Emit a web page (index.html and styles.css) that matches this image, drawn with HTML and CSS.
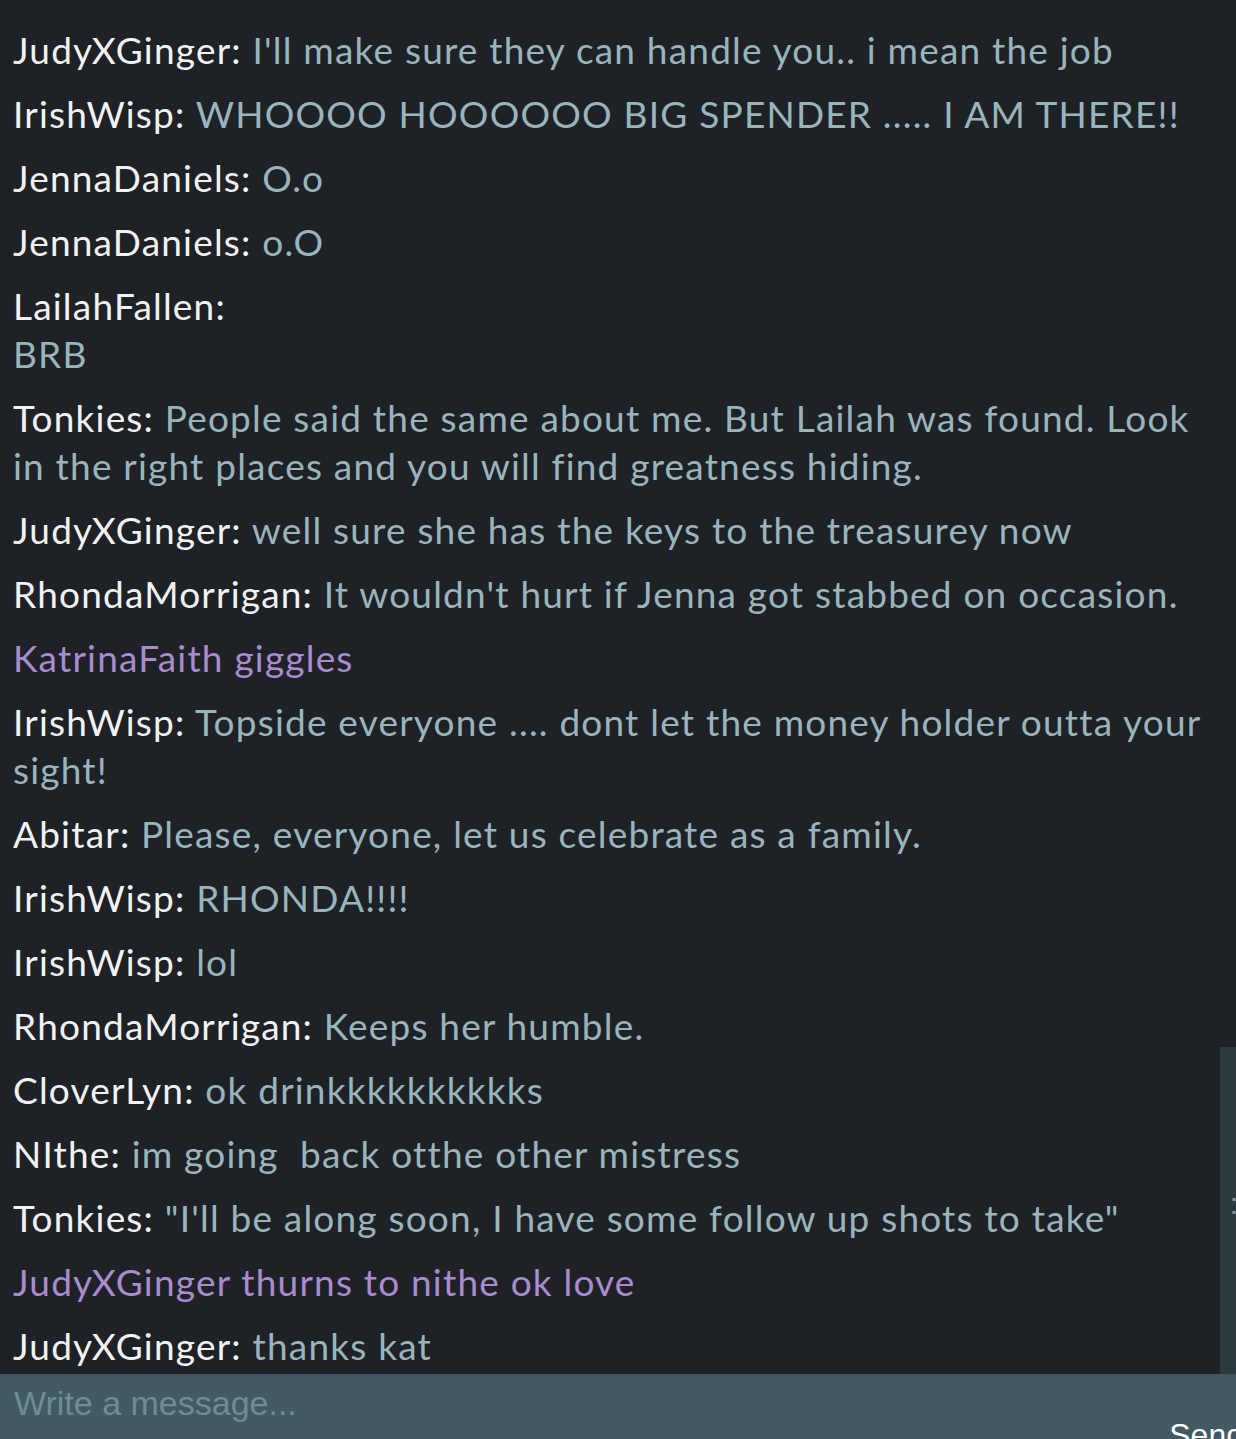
FILE: index.html
```html
<!DOCTYPE html>
<html lang="en">
<head>
<meta charset="utf-8">
<title>Chat</title>
<link rel="stylesheet" href="styles.css">
</head>
<body>
<div class="app">
  <div class="main">
    <div class="log">
      <div class="msg action">JennaDaniels smiles</div>
      <div class="msg"><span class="name">JudyXGinger:</span> <span class="text">I'll make sure they can handle you.. i mean the job</span></div>
      <div class="msg"><span class="name">IrishWisp:</span> <span class="text">WHOOOO HOOOOOO BIG SPENDER ..... I AM THERE!!</span></div>
      <div class="msg"><span class="name">JennaDaniels:</span> <span class="text">O.o</span></div>
      <div class="msg"><span class="name">JennaDaniels:</span> <span class="text">o.O</span></div>
      <div class="msg"><span class="name">LailahFallen:</span> <div class="text">BRB</div></div>
      <div class="msg"><span class="name">Tonkies:</span> <span class="text">People said the same about me. But Lailah was found. Look in the right places and you will find greatness hiding.</span></div>
      <div class="msg"><span class="name">JudyXGinger:</span> <span class="text">well sure she has the keys to the treasurey now</span></div>
      <div class="msg"><span class="name">RhondaMorrigan:</span> <span class="text">It wouldn't hurt if Jenna got stabbed on occasion.</span></div>
      <div class="msg action">KatrinaFaith giggles</div>
      <div class="msg"><span class="name">IrishWisp:</span> <span class="text">Topside everyone .... dont let the money holder outta your sight!</span></div>
      <div class="msg"><span class="name">Abitar:</span> <span class="text">Please, everyone, let us celebrate as a family.</span></div>
      <div class="msg"><span class="name">IrishWisp:</span> <span class="text">RHONDA!!!!</span></div>
      <div class="msg"><span class="name">IrishWisp:</span> <span class="text">lol</span></div>
      <div class="msg"><span class="name">RhondaMorrigan:</span> <span class="text">Keeps her humble.</span></div>
      <div class="msg"><span class="name">CloverLyn:</span> <span class="text">ok drinkkkkkkkkkks</span></div>
      <div class="msg"><span class="name">NIthe:</span> <span class="text">im going&nbsp; back otthe other mistress</span></div>
      <div class="msg"><span class="name">Tonkies:</span> <span class="text">"I'll be along soon, I have some follow up shots to take"</span></div>
      <div class="msg action">JudyXGinger thurns to nithe ok love</div>
      <div class="msg"><span class="name">JudyXGinger:</span> <span class="text">thanks kat</span></div>
    </div>
    <div class="side"><span class="grip">:</span></div>
  </div>
  <div class="composer">
    <div class="placeholder">Write a message...</div>
    <div class="send">Send</div>
  </div>
</div>
</body>
</html>
```

FILE: styles.css
```css
html, body {
  margin: 0;
  padding: 0;
  background: #1e2227;
}
.app {
  width: 1236px;
  height: 1439px;
  display: flex;
  flex-direction: column;
  overflow: hidden;
}
.main {
  height: 1374px;
  display: flex;
  flex-direction: row;
  align-items: flex-end;
  overflow: hidden;
}
.log {
  flex: 1;
  height: 1374px;
  box-sizing: border-box;
  padding: 0 10px 4px 13px;
  display: flex;
  flex-direction: column;
  justify-content: flex-end;
  overflow: hidden;
  font-family: Lato, "Open Sans", sans-serif;
  font-size: 37px;
  letter-spacing: 1.2px;
  line-height: 48px;
}
.msg {
  margin-top: 16px;
  color: #9ab4bc;
  flex: none;
}
.name {
  color: #f2f2f2;
}
.action {
  color: #a98bce;
}
.side {
  width: 16px;
  height: 327px;
  background: #2c3a40;
  position: relative;
  flex: none;
}
.grip {
  position: absolute;
  right: -2px;
  top: 140px;
  color: #8a9aa0;
  font-family: "Liberation Sans", sans-serif;
  font-size: 30px;
}
.composer {
  height: 65px;
  background: #435a63;
  border-top: 1px solid #3d525a;
  box-sizing: border-box;
  display: flex;
  align-items: flex-start;
  justify-content: space-between;
  font-family: "Liberation Sans", Arial, sans-serif;
}
.placeholder {
  color: #6e8d92;
  font-size: 34px;
  padding: 9px 0 0 14px;
}
.send {
  color: #ffffff;
  font-size: 32px;
  padding: 42px 0 0 0;
  margin-right: -8px;
}
```
